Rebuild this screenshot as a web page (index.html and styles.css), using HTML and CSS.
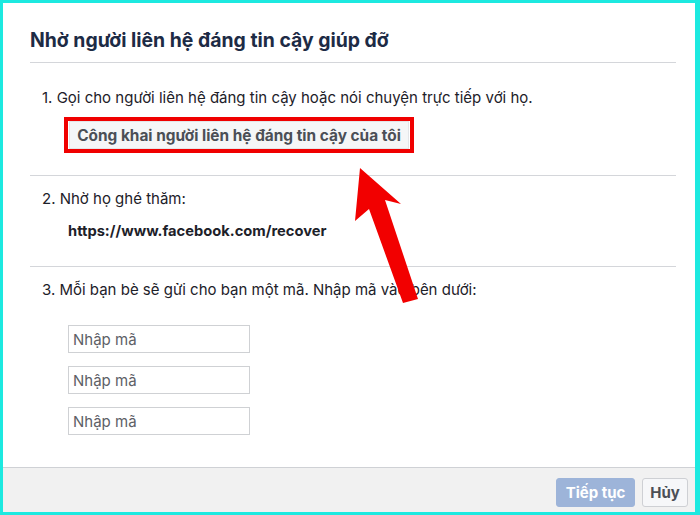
FILE: index.html
```html
<!DOCTYPE html>
<html lang="vi">
<head>
<meta charset="utf-8">
<link rel="stylesheet" href="styles.css">
</head>
<body>
<div class="dialog">
  <div class="content">
    <h1 class="title">Nhờ người liên hệ đáng tin cậy giúp đỡ</h1>
    <section class="step step-1">
      <p class="step-text">1. Gọi cho người liên hệ đáng tin cậy hoặc nói chuyện trực tiếp với họ.</p>
      <div class="highlight">
        <button class="reveal-btn" type="button">Công khai người liên hệ đáng tin cậy của tôi</button>
      </div>
    </section>
    <section class="step step-2">
      <p class="step-text">2. Nhờ họ ghé thăm:</p>
      <p class="url">https://www.facebook.com/recover</p>
    </section>
    <section class="step step-3">
      <p class="step-text">3. Mỗi bạn bè sẽ gửi cho bạn một mã. Nhập mã vào bên dưới:</p>
      <div class="codes">
        <input class="code" type="text" placeholder="Nhập mã">
        <input class="code" type="text" placeholder="Nhập mã">
        <input class="code" type="text" placeholder="Nhập mã">
      </div>
    </section>
  </div>
  <div class="footer">
    <button class="btn btn-primary" type="button">Tiếp tục</button>
    <button class="btn btn-cancel" type="button">Hủy</button>
  </div>
  <svg class="arrow" width="80" height="150" viewBox="0 0 80 150" aria-hidden="true">
    <polygon points="10,5 51,41 35,37 68,136 53,140 19,46 5,58" fill="#f20000"/>
  </svg>
</div>
</body>
</html>
```

FILE: styles.css
```css
* { box-sizing: border-box; }
html, body { margin: 0; padding: 0; }
body {
  width: 700px;
  height: 515px;
  background: #1de9e0;
  padding: 3px 5px 3px 3px;
  font-family: Inter, "Liberation Sans", Arial, sans-serif;
  color: #1d2129;
}
.dialog {
  position: relative;
  width: 692px;
  height: 509px;
  background: #ffffff;
  display: flex;
  flex-direction: column;
}
.content {
  flex: 1;
  margin: 0 19px 0 27px;
  display: flex;
  flex-direction: column;
}
.title {
  margin: 0;
  padding: 26px 0 11px 0;
  font-size: 19.4px;
  line-height: 22px;
  font-weight: 700;
  color: #1d2b45;
  border-bottom: 1px solid #d4d6da;
}
.step {
  padding-left: 12px;
}
.step + .step { border-top: 1px solid #d4d6da; }
.step-text {
  margin: 0;
  font-size: 15px;
  line-height: 20px;
}
.step-1 { padding-top: 25px; padding-bottom: 22px; }
.step-2 { padding-top: 13px; padding-bottom: 25px; }
.step-3 { padding-top: 13px; flex: 1; }
.highlight {
  margin: 9px 0 0 22px;
  width: 350px;
  height: 36px;
  border: 4px solid #f00000;
  padding: 0 1px;
  display: flex;
  align-items: stretch;
}
.reveal-btn {
  flex: 1;
  margin: 0;
  background: #f5f6f7;
  border: 1px solid #e3e5e8;
  color: #4b4f56;
  font-family: inherit;
  font-size: 15.4px;
  font-weight: 700;
  padding: 0;
}
.url {
  margin: 12px 0 0 26px;
  font-size: 14.7px;
  line-height: 20px;
  font-weight: 700;
}
.codes {
  margin: 25px 0 0 26px;
  display: flex;
  flex-direction: column;
  gap: 13px;
}
.code {
  width: 182px;
  height: 28px;
  margin: 0;
  border: 1px solid #cfd1d4;
  padding: 0 4px;
  font-family: inherit;
  font-size: 15px;
  color: #1d2129;
}
.code::placeholder { color: #5d6066; opacity: 1; }
.footer {
  height: 45px;
  background: #f1f1f1;
  border-top: 1px solid #cfd1d5;
  display: flex;
  justify-content: flex-end;
  align-items: flex-start;
  gap: 7px;
  padding: 10px 7px 0 0;
}
.btn {
  height: 29px;
  margin: 0;
  font-family: inherit;
  font-size: 15px;
  font-weight: 700;
  border-radius: 3px;
  padding: 0;
}
.btn-primary {
  width: 79px;
  background: #9db4d9;
  border: 1px solid #9db4d9;
  color: #ffffff;
}
.btn-cancel {
  width: 46px;
  background: #f6f7f9;
  border: 1px solid #ced0d4;
  color: #4b4f56;
}
.arrow {
  position: absolute;
  left: 347px;
  top: 160px;
}
```
